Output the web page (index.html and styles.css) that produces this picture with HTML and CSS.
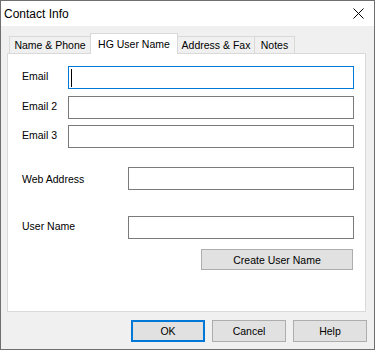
FILE: index.html
```html
<!DOCTYPE html>
<html lang="en">
<head>
    <meta charset="UTF-8">
    <title>Contact Info</title>
    <link rel="stylesheet" href="styles.css">
</head>
<body>
    <div class="window">
        <div class="titleBar">
            <span class="title">Contact Info</span>
            <svg class="closeIcon" width="11" height="11" viewBox="0 0 11 11">
                <path d="M0.5 0.5 L10.5 10.5 M10.5 0.5 L0.5 10.5" stroke="#000" stroke-width="1" fill="none"/>
            </svg>
        </div>
        <div class="client">
            <div class="tabs">
                <div class="tab tabName">Name &amp; Phone</div>
                <div class="tab tabUser active">HG User Name</div>
                <div class="tab tabAddress">Address &amp; Fax</div>
                <div class="tab tabNotes">Notes</div>
            </div>
            <div class="page">
                <div class="row">
                    <label class="shortLabel">Email</label>
                    <div class="field focused"><span class="caret"></span></div>
                </div>
                <div class="row rowEmail2">
                    <label class="shortLabel">Email 2</label>
                    <div class="field"></div>
                </div>
                <div class="row rowEmail3">
                    <label class="shortLabel">Email 3</label>
                    <div class="field"></div>
                </div>
                <div class="row rowWeb">
                    <label class="longLabel">Web Address</label>
                    <div class="field"></div>
                </div>
                <div class="row rowUser">
                    <label class="longLabel userLabel">User Name</label>
                    <div class="field"></div>
                </div>
                <div class="createRow">
                    <button class="btn createBtn">Create User Name</button>
                </div>
            </div>
            <div class="buttons">
                <button class="btn default">OK</button>
                <button class="btn">Cancel</button>
                <button class="btn">Help</button>
            </div>
        </div>
    </div>
</body>
</html>
```

FILE: styles.css
```css
* {
    margin: 0;
    padding: 0;
    box-sizing: border-box;
}

body {
    font-family: "Liberation Sans", Arial, sans-serif;
    font-size: 10.5px;
    color: #000;
    background: #fff;
}

.window {
    width: 375px;
    height: 350px;
    border: 1px solid #6f6f6f;
    display: flex;
    flex-direction: column;
}

.titleBar {
    height: 25px;
    background: #fff;
    display: flex;
    align-items: center;
    justify-content: space-between;
    padding: 0 10px 0 3px;
}

.title {
    font-size: 12px;
}

.closeIcon {
    display: block;
}

.client {
    flex: 1;
    background: #f0f0f0;
    padding: 7px 6px 0 6px;
}

.tabs {
    display: flex;
    align-items: flex-end;
    height: 20px;
    padding-left: 2px;
    position: relative;
    z-index: 1;
}

.tab {
    height: 17px;
    border: 1px solid #d9d9d9;
    border-bottom: none;
    background: #f0f0f0;
    display: flex;
    align-items: center;
    justify-content: center;
    white-space: nowrap;
    margin-left: -1px;
}

.tabName {
    width: 82px;
    margin-left: 0;
}

.tabUser {
    width: 88px;
}

.tabAddress {
    width: 78px;
}

.tabNotes {
    width: 41px;
}

.tab.active {
    height: 21px;
    margin-bottom: -1px;
    background: #fff;
    position: relative;
    z-index: 2;
}

.page {
    width: 359px;
    height: 259px;
    background: #fff;
    border: 1px solid #d9d9d9;
    padding: 12px 11px 0 14px;
}

.row {
    display: flex;
    align-items: center;
    height: 23px;
}

.rowEmail2 {
    margin-top: 7px;
}

.rowEmail3 {
    margin-top: 6px;
}

.rowWeb {
    margin-top: 19px;
}

.rowUser {
    margin-top: 26px;
}

.shortLabel {
    width: 46px;
    margin-top: -3px;
}

.longLabel {
    width: 106px;
}

.userLabel {
    margin-top: -4px;
}

.field {
    flex: 1;
    height: 23px;
    border: 1px solid #7a7a7a;
    background: #fff;
    padding: 2px 0 0 2px;
}

.field.focused {
    border-color: #0078d7;
}

.caret {
    display: block;
    width: 1px;
    height: 18px;
    background: #000;
}

.createRow {
    display: flex;
    justify-content: flex-end;
    margin-top: 10px;
    padding-right: 1px;
}

.btn {
    font-family: "Liberation Sans", Arial, sans-serif;
    font-size: 10.5px;
    color: #000;
    background: #e1e1e1;
    border: 1px solid #adadad;
    width: 74px;
    height: 22px;
}

.createBtn {
    width: 152px;
    height: 21px;
}

.btn.default {
    border: 2px solid #0078d7;
}

.buttons {
    display: flex;
    justify-content: flex-end;
    gap: 7px;
    margin-top: 8px;
    padding-right: 1px;
}
```
